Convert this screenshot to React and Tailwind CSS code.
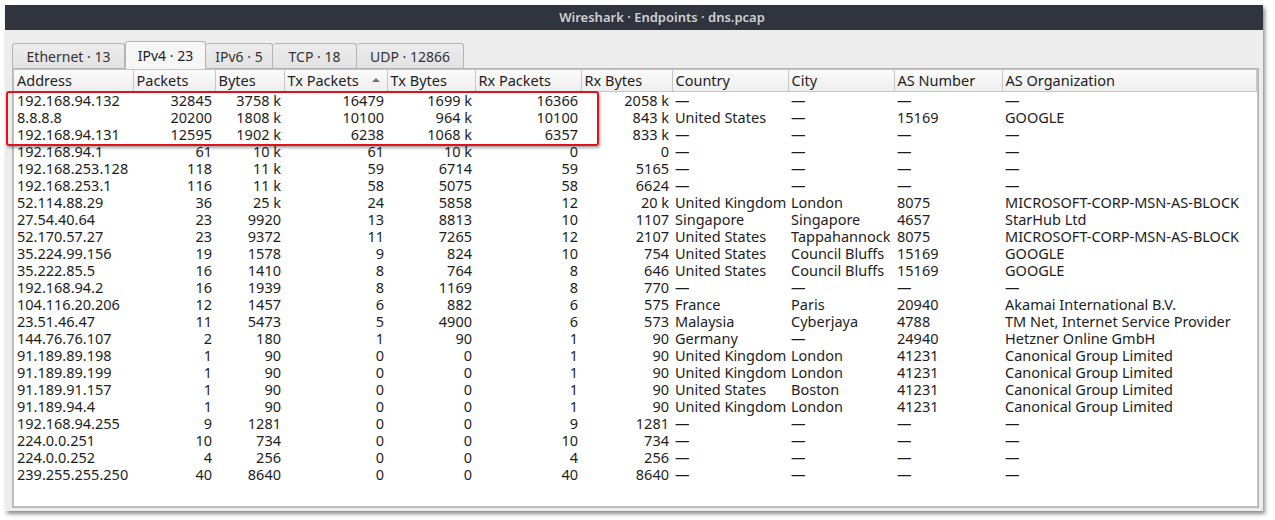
import React from 'react';

const cols = [
    { name: 'Address', w: 'w-[119px]', right: false },
    { name: 'Packets', w: 'w-[82px]', right: true },
    { name: 'Bytes', w: 'w-[69px]', right: true },
    { name: 'Tx Packets', w: 'w-[103px]', right: true, sort: true },
    { name: 'Tx Bytes', w: 'w-[88px]', right: true },
    { name: 'Rx Packets', w: 'w-[106px]', right: true },
    { name: 'Rx Bytes', w: 'w-[91px]', right: true },
    { name: 'Country', w: 'w-[116px]', right: false },
    { name: 'City', w: 'w-[106px]', right: false },
    { name: 'AS Number', w: 'w-[108px]', right: false },
    { name: 'AS Organization', w: 'w-auto', right: false },
];

const D = '—';
const none = [D, D, D, D];

const rows = [
    ['192.168.94.132', '32845', '3758 k', '16479', '1699 k', '16366', '2058 k', ...none],
    ['8.8.8.8', '20200', '1808 k', '10100', '964 k', '10100', '843 k', 'United States', D, '15169', 'GOOGLE'],
    ['192.168.94.131', '12595', '1902 k', '6238', '1068 k', '6357', '833 k', ...none],
    ['192.168.94.1', '61', '10 k', '61', '10 k', '0', '0', ...none],
    ['192.168.253.128', '118', '11 k', '59', '6714', '59', '5165', ...none],
    ['192.168.253.1', '116', '11 k', '58', '5075', '58', '6624', ...none],
    ['52.114.88.29', '36', '25 k', '24', '5858', '12', '20 k', 'United Kingdom', 'London', '8075', 'MICROSOFT-CORP-MSN-AS-BLOCK'],
    ['27.54.40.64', '23', '9920', '13', '8813', '10', '1107', 'Singapore', 'Singapore', '4657', 'StarHub Ltd'],
    ['52.170.57.27', '23', '9372', '11', '7265', '12', '2107', 'United States', 'Tappahannock', '8075', 'MICROSOFT-CORP-MSN-AS-BLOCK'],
    ['35.224.99.156', '19', '1578', '9', '824', '10', '754', 'United States', 'Council Bluffs', '15169', 'GOOGLE'],
    ['35.222.85.5', '16', '1410', '8', '764', '8', '646', 'United States', 'Council Bluffs', '15169', 'GOOGLE'],
    ['192.168.94.2', '16', '1939', '8', '1169', '8', '770', ...none],
    ['104.116.20.206', '12', '1457', '6', '882', '6', '575', 'France', 'Paris', '20940', 'Akamai International B.V.'],
    ['23.51.46.47', '11', '5473', '5', '4900', '6', '573', 'Malaysia', 'Cyberjaya', '4788', 'TM Net, Internet Service Provider'],
    ['144.76.76.107', '2', '180', '1', '90', '1', '90', 'Germany', D, '24940', 'Hetzner Online GmbH'],
    ['91.189.89.198', '1', '90', '0', '0', '1', '90', 'United Kingdom', 'London', '41231', 'Canonical Group Limited'],
    ['91.189.89.199', '1', '90', '0', '0', '1', '90', 'United Kingdom', 'London', '41231', 'Canonical Group Limited'],
    ['91.189.91.157', '1', '90', '0', '0', '1', '90', 'United States', 'Boston', '41231', 'Canonical Group Limited'],
    ['91.189.94.4', '1', '90', '0', '0', '1', '90', 'United Kingdom', 'London', '41231', 'Canonical Group Limited'],
    ['192.168.94.255', '9', '1281', '0', '0', '9', '1281', ...none],
    ['224.0.0.251', '10', '734', '0', '0', '10', '734', ...none],
    ['224.0.0.252', '4', '256', '0', '0', '4', '256', ...none],
    ['239.255.255.250', '40', '8640', '0', '0', '40', '8640', ...none],
];

const tabs = [
    { label: 'Ethernet · 13', w: 'w-[113px]' },
    { label: 'IPv4 · 23', w: 'w-[81px]', active: true },
    { label: 'IPv6 · 5', w: 'w-[67px]' },
    { label: 'TCP · 18', w: 'w-[84px]' },
    { label: 'UDP · 12866', w: 'w-[107px]' },
];

function Tab({ tab }) {
    if (tab.active) {
        return (
            <div className={`${tab.w} h-[28px] -mb-px relative z-10 flex items-center justify-center border border-b-0 border-[#b4b4b4] rounded-t-[3px] bg-[#f6f6f6] text-[#222]`}>
                {tab.label}
            </div>
        );
    }
    return (
        <div className={`${tab.w} h-[25px] flex items-center justify-center border border-l-0 first:border-l border-b-0 border-[#b4b4b4] rounded-t-[3px] bg-gradient-to-b from-[#ececec] to-[#e2e2e2] text-[#333]`}>
            {tab.label}
        </div>
    );
}

export default function App() {
    return (
        <div className="relative w-[1275px] h-[520px] bg-white pt-[5px] pl-[5px] font-['Noto_Sans',sans-serif] text-[14.5px] leading-[17px] text-[#1d1d1d]">
            <div className="w-[1258px] h-[506px] flex flex-col bg-[#ededed] shadow-[2px_3px_4px_rgba(0,0,0,0.45)] overflow-hidden">
                <div className="h-[25px] shrink-0 bg-[#30343e] flex items-center justify-center pl-[56px] text-[#cfd0d2] font-semibold text-[13px]">
                    Wireshark · Endpoints · dns.pcap
                </div>
                <div className="flex-1 flex flex-col pl-[7px] pr-[4px] pt-[10px] pb-[3px]">
                    <div className="flex items-end h-[28px] text-[14px]">
                        {tabs.map((t) => (
                            <Tab key={t.label} tab={t} />
                        ))}
                    </div>
                    <div className="flex-1 border border-[#b4b4b4] bg-[#f6f6f6]">
                        <div className="h-full border border-[#c4c4c4] bg-white overflow-hidden">
                            <table className="table-fixed w-full border-collapse">
                                <colgroup>
                                    {cols.map((c) => (
                                        <col key={c.name} className={c.w} />
                                    ))}
                                </colgroup>
                                <thead>
                                    <tr className="h-[21px] bg-gradient-to-b from-[#fbfbfb] to-[#eeeeee]">
                                        {cols.map((c) => (
                                            <th
                                                key={c.name}
                                                className="relative font-normal text-left px-[3px] border-r border-b border-[#c6c6c6] whitespace-nowrap text-[#1d1d1d]"
                                            >
                                                {c.name}
                                                {c.sort && (
                                                    <span className="absolute right-[7px] top-[8px] w-0 h-0 border-l-[4px] border-r-[4px] border-b-[4px] border-l-transparent border-r-transparent border-b-[#707070]" />
                                                )}
                                            </th>
                                        ))}
                                    </tr>
                                </thead>
                                <tbody>
                                    {rows.map((r, i) => (
                                        <tr key={i} className="h-[17px]">
                                            {r.map((v, j) => (
                                                <td
                                                    key={j}
                                                    className={`p-0 whitespace-nowrap ${cols[j].right ? 'text-right pr-[3px]' : 'text-left pl-[3px]'}`}
                                                >
                                                    {v}
                                                </td>
                                            ))}
                                        </tr>
                                    ))}
                                </tbody>
                            </table>
                        </div>
                    </div>
                </div>
            </div>
            <div className="absolute left-[6px] top-[91px] w-[593px] h-[55px] border-2 border-[#e3121a] rounded-[3px] shadow-[1px_2px_3px_rgba(0,0,0,0.35)]" />
        </div>
    );
}
